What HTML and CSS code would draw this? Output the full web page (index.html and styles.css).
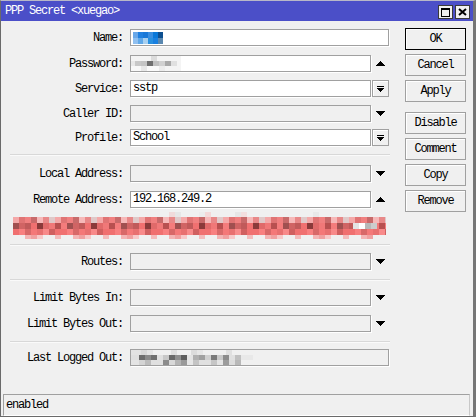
FILE: index.html
```html
<!DOCTYPE html>
<html>
<head>
<meta charset="utf-8">
<link rel="stylesheet" href="styles.css">
</head>
<body>
<div class="window">
  <div class="titlebar">
    <span class="title">PPP Secret &lt;xuegao&gt;</span>
    <div class="tbtns">
      <span class="tbtn"><svg width="9" height="9" viewBox="0 0 9 9" shape-rendering="crispEdges"><rect x="0.5" y="0.5" width="8" height="8" fill="none" stroke="#000"/><rect x="0" y="0" width="9" height="2" fill="#000"/></svg></span>
      <span class="tbtn"><svg width="9" height="8" viewBox="0 0 9 8"><path d="M1 1L8 7M8 1L1 7" stroke="#000" stroke-width="2"/></svg></span>
    </div>
  </div>
  <div class="main">
    <div class="form">
      <div class="row first"><label>Name:</label><div class="field wide"><span class="pix pix-name"></span></div></div>
      <div class="row m9"><label>Password:</label><div class="field"><span class="pix pix-pass"></span></div><span class="side"><svg class="ico" width="9" height="5" viewBox="0 0 9 5"><path d="M4 0h1v1h1v1h1v1h1v1h1v1H0V4h1V3h1V2h1V1h1z"/></svg></span></div>
      <div class="row"><label>Service:</label><div class="field">sstp</div><span class="side dd"><svg class="ico" width="7" height="6" viewBox="0 0 7 6"><path d="M0 0h7v1H0z M0 2h7v1h-1v1h-1v1h-1v1h-1v-1h-1v-1h-1v-1H0z"/></svg></span></div>
      <div class="row"><label>Caller ID:</label><div class="field off"></div><span class="side"><svg class="ico" width="9" height="5" viewBox="0 0 9 5"><path d="M0 0h9v1h-1v1h-1v1h-1v1h-1v1h-1v-1h-1v-1h-1v-1h-1v-1h-1z"/></svg></span></div>
      <div class="row m7"><label>Profile:</label><div class="field">School</div><span class="side dd"><svg class="ico" width="7" height="6" viewBox="0 0 7 6"><path d="M0 0h7v1H0z M0 2h7v1h-1v1h-1v1h-1v1h-1v-1h-1v-1h-1v-1H0z"/></svg></span></div>
      <div class="sep s8"></div>
      <div class="row m9"><label>Local Address:</label><div class="field off"></div><span class="side"><svg class="ico" width="9" height="5" viewBox="0 0 9 5"><path d="M0 0h9v1h-1v1h-1v1h-1v1h-1v1h-1v-1h-1v-1h-1v-1h-1v-1h-1z"/></svg></span></div>
      <div class="row m9"><label>Remote Address:</label><div class="field">192.168.249.2</div><span class="side"><svg class="ico" width="9" height="5" viewBox="0 0 9 5"><path d="M4 0h1v1h1v1h1v1h1v1h1v1H0V4h1V3h1V2h1V1h1z"/></svg></span></div>
      <div class="pix-pink"></div>
      <div class="sep s5"></div>
      <div class="row m7"><label>Routes:</label><div class="field off"></div><span class="side"><svg class="ico" width="9" height="5" viewBox="0 0 9 5"><path d="M0 0h9v1h-1v1h-1v1h-1v1h-1v1h-1v-1h-1v-1h-1v-1h-1v-1h-1z"/></svg></span></div>
      <div class="sep s9"></div>
      <div class="row m8"><label>Limit Bytes In:</label><div class="field off"></div><span class="side"><svg class="ico" width="9" height="5" viewBox="0 0 9 5"><path d="M0 0h9v1h-1v1h-1v1h-1v1h-1v1h-1v-1h-1v-1h-1v-1h-1v-1h-1z"/></svg></span></div>
      <div class="row m9"><label>Limit Bytes Out:</label><div class="field off"></div><span class="side"><svg class="ico" width="9" height="5" viewBox="0 0 9 5"><path d="M0 0h9v1h-1v1h-1v1h-1v1h-1v1h-1v-1h-1v-1h-1v-1h-1v-1h-1z"/></svg></span></div>
      <div class="sep s9"></div>
      <div class="row m6"><label>Last Logged Out:</label><div class="field wide off"><span class="pix pix-llo"></span></div></div>
    </div>
    <div class="buttons">
      <div class="btn default">OK</div>
      <div class="btn">Cancel</div>
      <div class="btn">Apply</div>
      <div class="btn gap">Disable</div>
      <div class="btn">Comment</div>
      <div class="btn">Copy</div>
      <div class="btn">Remove</div>
    </div>
  </div>
  <div class="status">enabled</div>
</div>
</body>
</html>
```
FILE: styles.css
```css
* { box-sizing: border-box; }
html, body { margin: 0; padding: 0; }
body {
  font-family: "Liberation Mono", "DejaVu Sans Mono", monospace;
  font-size: 12px;
  letter-spacing: -1.2px;
  color: #000;
  background: #f0f0f0;
}
.window {
  width: 476px;
  height: 417px;
  border-top: 1px solid #b8b8c8;
  border-left: 1px solid #6a6a6a;
  border-bottom: 1px solid #6a6a6a;
  border-right: 3px solid #767676;
  background: #f0f0f0;
  display: flex;
  flex-direction: column;
}
.titlebar {
  height: 20px;
  flex: none;
  background: #4b4fc8;
  color: #fff;
  display: flex;
  align-items: center;
  justify-content: space-between;
  padding: 0 3px 0 4px;
}
.title { line-height: 20px; }
.tbtns { display: flex; gap: 2px; padding-top: 2px; }
.tbtn {
  width: 15px;
  height: 14px;
  background: #f0f0f0;
  border: 1px solid #3a3a3a;
  display: flex;
  align-items: center;
  justify-content: center;
}
.main { display: flex; flex: none; }
.form { width: 404px; padding-top: 8px; }
.row { display: flex; align-items: center; height: 17px; margin-top: 8px; }
.row.first { margin-top: 0; }
.row.m6 { margin-top: 6px; }
.row.m7 { margin-top: 7px; }
.row.m8 { margin-top: 8px; }
.row.m9 { margin-top: 9px; }
.row label {
  width: 122px;
  margin-right: 7px;
  text-align: right;
  white-space: nowrap;
}
.field {
  width: 241px;
  height: 17px;
  border: 1px solid #a0a0a0;
  box-shadow: 1px 1px 0 #fff;
  background: #fff;
  padding-left: 2px;
  line-height: 15px;
  display: flex;
  align-items: center;
  white-space: nowrap;
}
.field.wide { width: 259px; }
.field.off { background: #f0f0f0; }
.side {
  width: 18px;
  height: 17px;
  display: flex;
  align-items: center;
  justify-content: center;
  padding-left: 1px;
}
.side.dd {
  width: 17px;
  margin-left: 1px;
  padding-left: 0;
  border: 1px solid #a0a0a0;
  box-shadow: inset 1px 1px 0 #fff;
}
.ico { display: block; shape-rendering: crispEdges; fill: #000; }
.sep {
  margin-left: 9px;
  width: 380px;
  height: 2px;
  border-top: 1px solid #d8d8d8;
  border-bottom: 1px solid #fafafa;
}
.sep.s5 { margin-top: 5px; }
.sep.s8 { margin-top: 8px; }
.sep.s9 { margin-top: 9px; }
.pix { display: block; flex: none; }
.pix-name {
  width: 30px;
  height: 12px;
  margin-left: 0;
  background:
    linear-gradient(90deg, #6aa8e8 0 5px, #2080e0 5px 10px, #1878d8 10px 15px, #3a8ee0 15px 20px, #0a78d8 20px 25px, #0d4f90 25px 30px) 0 0 / 30px 6px no-repeat,
    linear-gradient(90deg, #90c0f0 0 5px, #60a8e8 5px 10px, #a8d0f0 10px 15px, #2890e0 15px 20px, #1a80e0 20px 25px, #5a88b0 25px 30px) 0 6px / 30px 6px no-repeat;
}
.pix-pass {
  width: 50px;
  height: 15px;
  margin-left: -2px;
  background:
    linear-gradient(90deg, #f4f4f4 0 20px, #dcdcdc 20px 26px, #f4f4f4 26px 50px) 0 0 / 50px 5px no-repeat,
    linear-gradient(90deg, #e8e8e8 0 4px, #c8c8c8 4px 10px, #c4c4c4 10px 16px, #707070 16px 22px, #c0c0c0 22px 28px, #d0d0d0 28px 34px, #a8a8a8 34px 40px, #e0e0e0 40px 46px, #f4f4f4 46px 50px) 0 5px / 50px 5px no-repeat,
    linear-gradient(90deg, #f8f8f8 0 10px, #e8e8e8 10px 16px, #fafafa 16px 28px, #ececec 28px 34px, #f4f4f4 34px 50px) 0 10px / 50px 5px no-repeat;
}
.pix-llo {
  width: 134px;
  height: 15px;
  margin-left: -2px;
  background:
    linear-gradient(90deg, #e2e2e2 0 10px, #d8d8d8 10px 16px, #e4e4e4 16px 22px, transparent 22px 40px, #e0e0e0 40px 46px, transparent 46px 60px, #dcdcdc 60px 66px, #e6e6e6 66px 72px, transparent 72px 95px, #e0e0e0 95px 101px, transparent 101px) 0 0 / 134px 5px no-repeat,
    linear-gradient(90deg, #dedede 0 8px, #6c6c6c 8px 14px, #8a8a8a 14px 20px, #707070 20px 26px, #e0e0e0 26px 32px, #c8c8c8 32px 38px, #6a6a6a 38px 44px, #909090 44px 50px, #5e5e5e 50px 56px, #e4e4e4 56px 62px, #b0b0b0 62px 68px, #a0a0a0 68px 74px, #d0d0d0 74px 80px, #7a7a7a 80px 86px, #c8c8c8 86px 92px, #8c8c8c 92px 98px, #e0e0e0 98px 104px, #c0c0c0 104px 110px, #e8e8e8 110px 122px, transparent 122px) 0 5px / 134px 5px no-repeat,
    linear-gradient(90deg, #e4e4e4 0 8px, #d4d4d4 8px 14px, #bcbcbc 14px 20px, #e0e0e0 20px 32px, #8c8c8c 32px 38px, #d8d8d8 38px 44px, #b4b4b4 44px 50px, #9a9a9a 50px 56px, #e6e6e6 56px 62px, #c4c4c4 62px 68px, #e0e0e0 68px 80px, #c6c6c6 80px 86px, #e4e4e4 86px 92px, #9c9c9c 92px 98px, #dcdcdc 98px 104px, #b8b8b8 104px 110px, #f0f0f0 110px 134px) 0 10px / 134px 5px no-repeat;
}
.pix-pink {
  margin: 4px 0 0 12px;
  width: 373px;
  height: 27px;
  background:
    linear-gradient(90deg, transparent 0 340px, #e4e4e4 340px 346px, #ffffff 346px 352px, #b8b8b8 352px 358px, #cccccc 358px 364px, transparent 364px) 0 11px / 373px 6px no-repeat,
    linear-gradient(90deg, transparent 0 156px, #f0dada 156px 162px, #e6e6e6 162px 168px, transparent 168px 186px, #ececec 186px 192px, #f4d8d8 192px 198px, transparent 198px 222px, #e6e6e6 222px 228px, #f2dede 228px 234px, transparent 234px 300px, #e8e8e8 300px 306px, transparent 306px) 0 0 / 373px 5px no-repeat,
    repeating-linear-gradient(90deg, #f4a8a8 0 6px, #e07474 6px 12px, #f08080 12px 18px, #c86a6a 18px 24px, #f6b8b8 24px 30px, #e88888 30px 36px, #e0c8c8 36px 42px) 0 5px / 373px 6px no-repeat,
    repeating-linear-gradient(90deg, #a05050 0 6px, #d06464 6px 12px, #c05a5a 12px 18px, #f07070 18px 24px, #8a3a3a 24px 30px, #e06a6a 30px 36px, #f07878 36px 42px, #b85050 42px 48px, #f47c7c 48px 54px) 0 11px / 373px 6px no-repeat,
    repeating-linear-gradient(90deg, #f07070 0 6px, #f88080 6px 12px, #d86868 12px 18px, #f47878 18px 24px, #e87070 24px 30px, #f88a8a 30px 36px, #d06060 36px 42px, #f07070 42px 48px) 0 17px / 373px 6px no-repeat,
    repeating-linear-gradient(90deg, transparent 0 12px, #f4b4b4 12px 18px, #f0a0a0 18px 24px, #f8c8c8 24px 30px, transparent 30px 42px, #f4bcbc 42px 48px) 0 23px / 360px 4px no-repeat;
}
.buttons {
  width: 61px;
  padding-top: 7px;
  display: flex;
  flex-direction: column;
  gap: 4px;
}
.btn {
  height: 22px;
  border: 1px solid #a0a0a0;
  box-shadow: inset 1px 1px 0 #fff;
  background: #f0f0f0;
  display: flex;
  align-items: center;
  justify-content: center;
  white-space: nowrap;
}
.btn.default { border-color: #000; }
.btn.gap { margin-top: 6px; }
.status {
  margin: auto 3px 0 2px;
  height: 22px;
  border: 1px solid;
  border-color: #a0a0a0 #c8c8c8 #fff #a0a0a0;
  padding-left: 2px;
  line-height: 20px;
}
```
